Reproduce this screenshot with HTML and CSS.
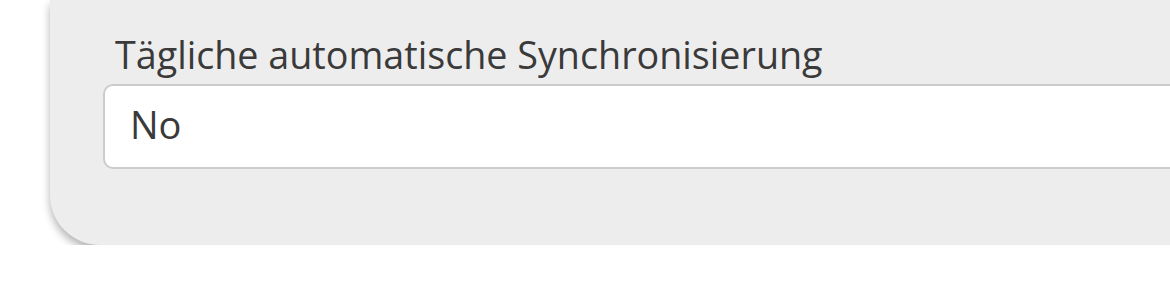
FILE: index.html
```html
<!DOCTYPE html>
<html>
<head>
<title>Synchronisierung</title>
<link rel="stylesheet" href="styles.css">
</head>
<body>
    <div class="card">
        <div class="field">
            <label class="field-label" for="autoSync">Tägliche automatische Synchronisierung</label>
            <div class="select-box" id="autoSync">No</div>
        </div>
    </div>
</body>
</html>
```

FILE: styles.css
```css
html, body {
    margin: 0;
    padding: 0;
    background: #ffffff;
    overflow: hidden;
}
body {
    font-family: "Open Sans", "Noto Sans", sans-serif;
    color: #3a3a3a;
}
.card {
    margin-left: 50px;
    width: 1250px;
    background-color: #ededed;
    border-bottom-left-radius: 50px;
    box-shadow: 0 5px 9px rgba(0, 0, 0, 0.3);
    padding: 29px 0 76px 53px;
    box-sizing: border-box;
}
.field-label {
    display: block;
    font-size: 37.7px;
    line-height: 52px;
    padding-left: 12px;
    margin-bottom: 3px;
}
.select-box {
    background: #ffffff;
    border: 2px solid #cccccc;
    border-radius: 10px;
    font-size: 38px;
    line-height: 77px;
    height: 77px;
    padding-bottom: 4px;
    padding-left: 25px;
}
```
